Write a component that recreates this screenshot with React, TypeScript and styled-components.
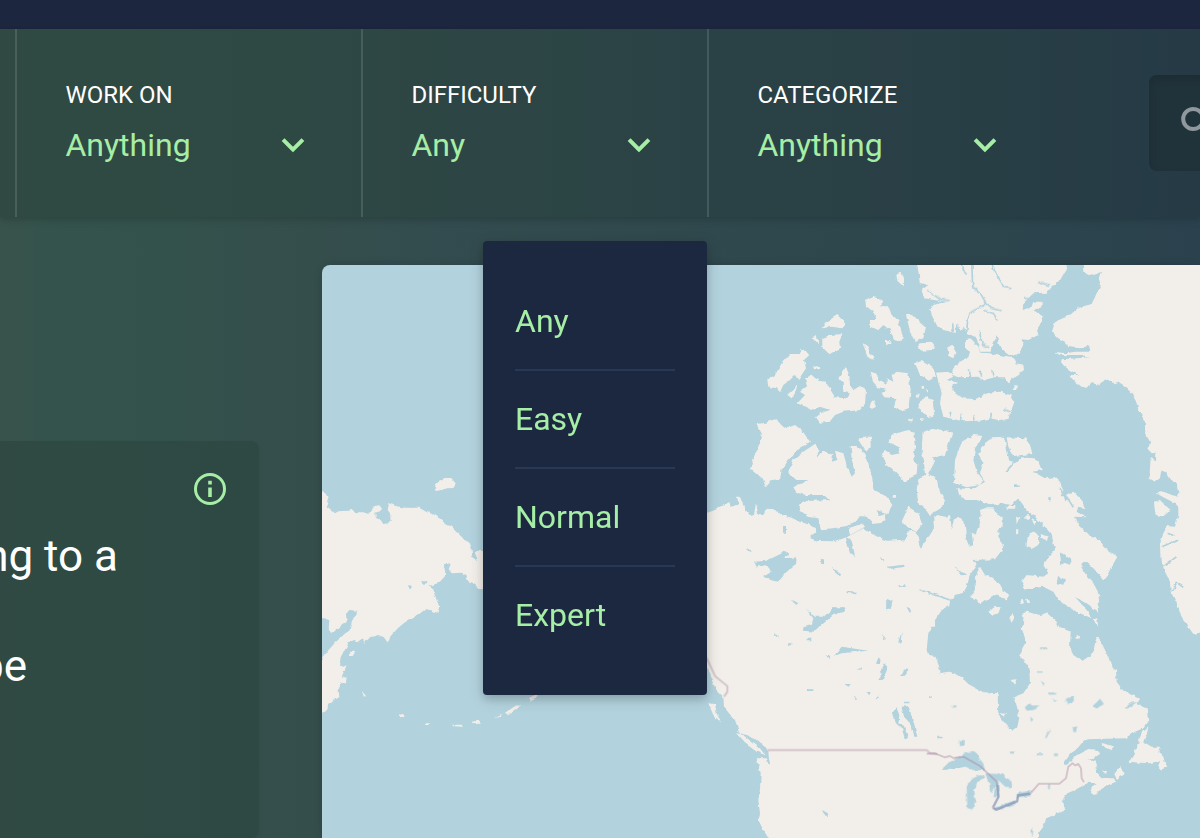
import React from 'react';
import styled, { createGlobalStyle } from 'styled-components';

const mint = '#a6eea5';
const water = '#b2d2dd';
const land = '#f2efea';

const GlobalStyle = createGlobalStyle`
  *, *::before, *::after { box-sizing: border-box; }
  body { margin: 0; overflow: hidden; background: #1c273f; }
`;

const Page = styled.div`
  position: relative;
  display: flex;
  flex-direction: column;
  width: 1200px;
  height: 838px;
  overflow: hidden;
  font-family: Roboto, 'Liberation Sans', sans-serif;
  color: #fff;
  background: linear-gradient(90deg, #39534c 0, #34534c 50px, #34524c 180px, #354f4c 270px, #334c4e 420px, #2d464d 950px, #2b424e 1200px);
`;

const TopBar = styled.header`
  flex: 0 0 29px;
  background: #1c273f;
`;

const FilterBar = styled.nav`
  display: flex;
  flex: 0 0 188px;
  background: linear-gradient(90deg, #304a43 0, #2e4844 300px, #2b4345 650px, #283e45 1000px, #253a45 1200px);
  box-shadow: 0 4px 8px rgba(0, 0, 0, 0.1), 0 2px 4px rgba(0, 0, 0, 0.06);
`;

const Lead = styled.div`
  flex: 0 0 15px;
`;

const Filter = styled.div`
  flex: 0 0 346px;
  padding: 48px 48px 48px 48.4px;
  border-left: 2px solid rgba(255, 255, 255, 0.12);
`;

const FilterLabel = styled.div`
  margin-bottom: 8px;
  font-size: 24px;
  line-height: 36px;
`;

const FilterValue = styled.div`
  display: flex;
  align-items: center;
  justify-content: space-between;
  color: ${mint};
  font-size: 32px;
  line-height: 48px;
`;

const SearchBox = styled.div`
  flex: 0 0 300px;
  height: 96px;
  margin: 46px 0 0 96px;
  padding: 28px;
  border-radius: 8px;
  background: #20323a;
  box-shadow: inset 0 4px 8px rgba(0, 0, 0, 0.12);
`;

const Content = styled.main`
  display: flex;
  flex: 1;
  align-items: flex-start;
  justify-content: space-between;
`;

const ChallengeCard = styled.section`
  width: 259px;
  height: 397px;
  margin-top: 224px;
  padding: 32px 33px 0 0;
  border-radius: 0 8px 8px 0;
  background: linear-gradient(90deg, #304a43, #2e4844);
  box-shadow: 0 2px 4px rgba(0, 0, 0, 0.07);
`;

const CardTools = styled.div`
  display: flex;
  justify-content: flex-end;
  height: 32px;
  margin-bottom: 24px;
`;

const Line = styled.div<{ $width: number }>`
  display: flex;
  justify-content: flex-end;
  width: ${(p) => p.$width}px;
  margin-bottom: 55px;
  overflow: hidden;
  font-size: 44px;
  line-height: 55px;
  white-space: nowrap;
`;

const MapPane = styled.section`
  width: 878px;
  height: 573px;
  margin-top: 48px;
  overflow: hidden;
  border-radius: 8px 0 0 0;
  background: ${water};
  box-shadow: 0 0 8px rgba(0, 0, 0, 0.14);
`;

const MapSvg = styled.svg`
  display: block;
`;

const Menu = styled.ul`
  position: absolute;
  left: 483px;
  top: 241px;
  width: 224px;
  margin: 0;
  padding: 32px;
  list-style: none;
  border-radius: 4px;
  background: #1c2840;
  box-shadow: 0 4px 8px rgba(0, 0, 0, 0.14), 0 4px 16px rgba(0, 0, 0, 0.14);
`;

const MenuItem = styled.li`
  padding: 24px 0;
  color: ${mint};
  font-size: 32px;
  line-height: 48px;
  & + & { border-top: 2px solid #293853; }
`;

const Chevron = () => (
  <svg width="40" height="40" viewBox="0 0 20 20" fill={mint}>
    <path d="M9.293 12.95l.707.707L15.657 8l-1.414-1.414L10 10.828 5.757 6.586 4.343 8z" />
  </svg>
);

const InfoIcon = () => (
  <svg width="32" height="32" viewBox="0 0 32 32" fill="none">
    <circle cx="16" cy="16" r="14.5" stroke={mint} strokeWidth="3" />
    <path d="M14.2 7.8h3.6v3.6h-3.6zM14.2 14.4h3.6V24h-3.6z" fill={mint} />
  </svg>
);

const SearchIcon = () => (
  <svg width="36" height="36" viewBox="0 0 36 36" fill="none" stroke="#8f989c" strokeWidth="4">
    <circle cx="16.2" cy="16" r="10" />
    <path d="M23 23l9 9" />
  </svg>
);

/* Each region is digitised at three units per map pixel from its own origin. */
interface Region {
  x: number;
  y: number;
  land: string[];
  lakes?: string;
  channels?: string;
  border?: string;
}

const regions: Region[] = [
  {
    x: 320, y: 460,
    land: [
      'M-20 86L14 96 22 110 26 128 20 142 30 150 44 160 56 154 84 152 94 150 104 157 130 157 145 162 152 154 164 138 178 136 186 146 180 154 166 158 168 174 182 180 190 192 204 190 212 180 210 160 203 150 207 130 225 137 255 143 298 143 318 155 345 165 365 180 372 190 390 198 412 218 435 240 453 256 455 270 457 292 464 300 472 296 465 280 475 272 520 275 520 388 478 386 462 372 445 364 436 345 425 338 395 340 386 328 392 312 380 308 370 318 376 330 374 350 355 370 335 376 325 378 340 388 345 408 352 425 358 440 352 458 335 452 318 447 300 460 285 472 255 487 235 503 212 528 202 547 192 532 175 525 150 532 132 552 130 534 112 546 104 540 86 546 80 562 62 590 60 610 70 620 80 616 72 634 66 648 80 655 78 670 62 668 56 690 58 712 45 718 24 732 22 752-20 768-20 620 6 598 24 572 45 548 76 520 88 512 95 485 112 452 88 450 78 462 80 486 60 500 34 522 26 504 28 480 6 474-20 470Z',
      'M344 90L346 76 360 60 375 54 395 55 408 72 400 84 382 85 365 89 350 93Z',
      'M84 588L96 574 106 576 98 588Z',
      'M125 692L138 708 132 710ZM238 764L250 762 254 770 242 772ZM318 790h8v5h-8ZM396 794L430 794 428 800 400 799ZM455 785L475 782 480 788 458 790ZM555 758L580 742 590 736 600 738 590 748 565 762ZM520 774L545 765 543 770ZM622 716L655 700 652 710 630 722Z',
    ],
    lakes: 'M303 364h20l-6 10h-12ZM265 376h10v7h-10Z',
  },
  {
    x: 740, y: 260,
    land: [
      'M468 40L485 35 492 55 492 78 482 72 472 62Z',
      'M375 120L400 108 425 120 425 140 445 138 455 165 475 180 488 230 480 245 462 240 450 210 430 195 415 210 390 200 390 180 410 180 400 155 378 138Z',
      'M245 205L260 185 292 165 313 185 308 205 275 200Z',
      'M215 232L225 228 238 242 232 252Z',
      'M247 235L270 225 307 222 298 245 300 265 268 283 247 262Z',
      'M368 250L380 255 402 300 382 290ZM430 240L450 240 455 250 440 256ZM220 320L240 318 240 328 222 328Z',
      'M82 360L105 345 125 310 150 282 180 282 185 265 208 285 192 300 198 325 175 360 165 345 150 360 130 375 120 397 110 385 85 380Z',
      'M142 405L172 375 165 400 155 415Z',
      'M172 430L195 405 180 395 200 380 195 355 215 345 235 362 255 365 275 395 285 412 318 415 330 400 310 395 308 365 295 355 318 320 328 345 330 375 340 390 360 378 378 390 375 430 360 450 340 452 310 455 285 465 270 485 240 488 228 472 245 458 270 450 240 440 215 450 195 440Z',
      'M392 335L405 340 420 360 440 372 440 355 460 365 455 345 470 335 505 340 512 390 505 445 485 452 462 440 470 415 430 412 425 395 440 390 415 385 400 370Z',
      'M390 430L400 420 408 440 395 448Z',
      'M545 378h8v8h-8ZM558 386l8 4-4 8ZM530 405l10-3-6 14ZM510 475h8v8h-8ZM543 475h8v6h-8Z',
    ],
  },
  {
    x: 900, y: 260,
    land: [
      'M50 0L505 0 495 35 480 60 455 82 440 98 400 100 370 130 368 150 395 140 400 125 425 125 425 142 400 150 430 170 425 190 410 205 415 225 385 240 365 238 370 255 355 282 330 288 300 265 290 225 285 240 270 275 240 275 230 235 205 220 190 200 185 215 165 200 165 218 130 210 110 195 90 150 100 135 140 125 100 120 75 115 65 90 85 75 60 70Z',
      'M195 240L215 238 235 260 240 278 270 280 300 288 345 295 350 310 370 315 372 330 345 350 325 370 315 352 280 352 250 362 235 350 175 352 155 345 160 325 180 305 205 292 210 275 195 265Z',
      'M108 338L145 335 160 350 140 360 175 368 155 378 165 400 190 415 225 418 265 398 300 395 330 405 342 430 330 460 325 478 295 480 270 475 240 482 190 484 150 475 130 470 120 430 125 400Z',
      'M18 162L35 162 60 185 78 200 70 235 45 245 30 215Z',
      'M55 250L105 248 103 270 60 272ZM142 262L158 258 167 275 160 292 145 285Z',
      'M45 310L65 303 100 325 108 350 90 362 60 345ZM50 440L75 408 98 420 103 470 85 473Z',
      'M338 390l8-14 8 0-6 14Z',
      'M548 0L550 35 570 48 590 42 603 35 596 55 603 75 590 100 575 132 535 143 510 165 465 185 456 215 475 235 500 248 505 262 540 265 568 257 570 275 525 275 500 280 460 276 480 285 540 285 570 292 530 295 485 298 483 310 505 328 535 345 508 345 525 365 545 380 562 384 575 370 600 375 618 355 640 370 655 365 680 382 700 402 710 430 715 450 735 470 735 510 748 530 755 550 742 565 755 580 770 578 768 610 940 610 940 0Z',
    ],
    channels: 'M215 0L218 80 240 98 256 125 250 138 215 155 203 180 200 218M256 130L275 145 302 152M250 150L280 160 292 180M268 0L300 60 312 82 335 86M186 0L190 30 200 40M82 90L120 118 150 122M238 215L248 255 268 262M415 66L448 76M372 112L400 122M212 348L208 330M245 350L240 332M280 350L276 332M160 215L158 190M175 212L172 192M150 470L152 452M182 480L184 462M225 480L222 466M272 475L274 458M330 455L312 448',
  },
  {
    x: 700, y: 400,
    land: [
      'M0 345L40 332 62 316 88 310 92 320 110 316 118 306 108 290 118 290 130 305 136 330 152 348 162 345 168 308 175 345 190 345 200 326 225 328 245 345 275 353 300 366 325 372 345 385 350 396 332 405 332 415 350 423 400 424 440 412 462 400 490 385 510 398 535 412 560 422 600 420 618 422 620 395 640 392 655 408 664 446 670 430 690 405 702 385 700 355 712 345 735 350 750 345 755 385 762 400 762 360 775 352 790 360 790 575 762 578 762 595 750 600 748 615 725 630 705 660 705 680 0 680Z',
      'M168 72L195 68 225 58 260 85 285 75 305 90 330 125 285 155 262 185 245 210 240 238 215 240 198 262 188 235 150 208 165 165 185 115 185 100Z',
      'M345 132L355 145 352 175 370 152 400 165 395 185 412 180 405 152 430 160 440 195 455 230 465 220 455 180 452 138 470 138 490 155 505 190 517 235 520 268 560 290 577 315 560 345 545 368 520 372 500 350 480 348 470 362 440 378 400 385 362 388 355 355 330 352 305 335 295 315 320 303 390 300 375 285 320 285 290 278 280 262 325 240 285 240 265 215 280 180 310 155Z',
      'M475 120L490 110 512 110 515 125 500 158 488 140Z',
      'M445 385L490 370 495 380 450 405Z',
      'M545 160L555 150 575 165 600 160 595 140 565 125 575 105 630 88 640 100 645 140 640 180 652 195 650 225 628 235 615 250 600 230 575 205 560 195Z',
      'M668 95L705 85 757 98 735 165 700 172 702 190 685 222 710 235 715 265 735 302 722 325 690 345 680 330 655 310 650 270 655 235 675 225 672 180 665 160Z',
      'M605 365L625 320 655 340 665 370 650 395 620 380Z',
      'M578 285h10v8h-10ZM628 56h8v8h-8Z',
    ],
    lakes: 'M162 485L200 482 255 455 265 465 250 475 290 472 288 495 260 515 235 545 210 540 190 530 215 515 200 495 170 500ZM362 478l10 0 0 14-8 0ZM396 500L425 525 418 528 404 516ZM272 600L298 610 290 616ZM140 430L152 460 144 456ZM560 500L612 494 614 500 575 506ZM655 570L680 572 678 578ZM560 605L578 600 572 625 558 628ZM595 556h22v5h-22ZM440 574h26v6h-26ZM620 620L634 628 630 638ZM252 378h6v20h-6ZM540 470l10 10-6 0ZM437 412L455 420 465 470 450 460ZM670 345l28 5-12 22ZM530 330l30 12-22 6Z',
    channels: 'M680 575L720 590 750 600',
  },
  {
    x: 930, y: 400,
    land: [
      'M60 400L72 360 85 350 105 375 108 415 118 440 130 435 125 400 138 400 145 380 152 345 150 330 165 325 190 325 205 345 218 355 218 380 205 392 205 410 222 435 212 455 195 478 125 480 140 492 120 525 110 560 100 578 60 590Z',
      'M72 248L75 180 95 125 130 105 160 108 135 145 130 180 140 215 160 240 150 255 110 262Z',
      'M82 265L130 268 165 245 150 220 160 190 145 165 155 140 190 112 222 110 230 145 238 185 255 190 275 172 310 175 325 185 335 210 310 215 345 235 375 232 390 245 400 270 395 290 430 275 455 300 465 325 445 320 440 335 468 352 435 350 445 375 475 405 510 420 520 440 562 470 545 500 535 520 522 540 490 505 465 482 450 495 465 520 490 550 512 590 500 610 505 635 470 610 435 590 470 630 485 655 440 635 405 615 385 600 370 575 340 560 285 568 275 545 290 525 340 530 355 520 338 492 360 465 375 450 365 405 345 380 315 350 290 330 265 295 245 315 215 310 190 315 140 300 110 300 88 285Z',
      'M230 112L285 115 300 135 308 162 275 165 250 168 235 140Z',
      'M290 430L295 405 315 396 328 410 325 435 305 447 290 440Z',
      'M150 500L165 525 190 535 212 555 215 572 238 585 230 598 195 585 170 600 150 612 140 598 120 592 138 570 135 530Z',
      'M175 635L195 620 212 622 205 640 185 648ZM238 655L248 640 255 650 245 668ZM270 600l8-4 4 14-8 2ZM288 596l10 2 2 8-8 0ZM492 658l10-4 2 24-8-6ZM286 346h14v10h-14ZM304 358l16 6-6 12ZM332 402l22 8-4 10-16-4ZM258 350l10 4-8 18ZM255 388h10v12h-10ZM230 318h26v8h-26Z',
      'M610-10L635 30 640 60 650 70 645 100 660 125 655 150 680 158 678 180 662 175 660 205 658 235 675 245 690 235 695 210 710 220 715 235 740 250 745 280 740 290 700 275 680 280 700 292 735 310 745 320 745 345 735 380 712 378 700 400 690 435 692 480 705 515 720 545 722 575 740 610 755 650 775 680 790 702 850 690 850-10Z',
      'M672 305L690 300 705 315 722 330 705 345 685 350 675 335Z',
    ],
    lakes: 'M390 455L425 480 420 494 402 488 394 500ZM384 528L405 542 400 554 380 550ZM74 500L108 524 96 526ZM150 480h16l18 30-8-2ZM352 296l14-4-6 10ZM252 256h14v5h-14Z',
    channels: 'M695 440L745 420M700 500L740 470M725 575L740 548 760 562M712 400L735 408M695 255L728 265M390 262L410 300M410 290L430 322M228 215L250 190M715 232L700 262',
  },
  {
    x: 700, y: 600,
    land: [
      'M0-10L750-10 748 12 725 30 700 65 685 100 680 150 685 165 705 168 715 190 722 220 745 215 790 232 790 730 210 730 205 714 190 690 175 660 180 640 175 600 180 570 182 520 170 475 200 475 208 490 205 455 190 440 160 415 115 395 110 370 95 350 72 320 70 290 40 260 30 220 10 180 0 180Z',
      'M108 400L125 402 155 425 180 445 195 465 170 455 135 430Z',
      'M25 310L45 312 50 340 63 368 40 345Z',
    ],
    lakes: 'M318 28L345 50 375 50 400 22 438 22 430 35 400 45 365 75 345 95 308 92 310 82 335 75 340 55ZM402 168L425 140 455 145 505 152 455 157 425 160ZM605 320L625 318 640 365 652 410 643 410 635 375 612 350ZM575 340L590 325 598 345 595 370 612 378 625 415 615 418 605 385 588 370ZM540 215L555 190 565 200 548 240 535 240 545 225ZM528 190l8-18 6 8-6 16ZM600 225L622 203 620 218 606 232ZM378 165h10l0 14ZM222 104h10v6h-10ZM264 130h10v6h-10ZM320 116h14v5h-14ZM470 210l14-8 0 6ZM432 252h20l-6 8ZM318 268h22v5h-22ZM500 276h12l-4 10ZM462 288l8 4-4 5ZM528 290h8v5h-8ZM684 294l12-6-2 6ZM612 305h16v5h-16ZM366 630L384 640 384 650 376 650ZM275 0L295 8 290 14ZM558 0L575 5 572 28 560 22ZM620 22L636 30 630 38ZM595 125L605 95 602 130ZM548 102L558 118 552 120ZM725 510L750 485 780 475 795 480 795 500 760 508ZM712 410h16v5h-16Z',
    channels: 'M60 298L75 350M30 235L55 290M170 420L200 450M205 480L208 495',
    border: 'M202 450L680 450 690 460 712 462M10 160L24 182 45 228 82 258 82 275 72 290',
  },
  {
    x: 930, y: 600,
    land: [
      'M-10 225L32 220 60 215 95 232 115 252 160 277 203 280 205 345 225 370 245 392 262 380 268 355 258 310 250 292 280 280 300 250 298 205 280 180 267 165 285 130 285 115 275 85 283 60 275 42 290 35 330 45 350 38 380 65 388 82 422 95 420 140 430 165 455 182 475 172 490 155 497 120 504 108 515 130 535 170 545 200 558 212 560 245 580 272 605 285 630 298 618 308 650 325 655 365 640 385 615 395 585 415 470 418 455 430 445 442 425 455 405 485 402 500 418 488 440 465 475 447 505 450 510 462 490 475 475 480 498 485 502 500 500 520 515 535 550 535 562 545 540 552 515 565 495 585 480 578 485 560 500 550 470 548 462 555 435 570 412 580 400 595 402 620 412 630 380 640 350 655 340 680 325 700 322 730-10 730Z',
      'M655 382L650 405 640 425 665 440 690 440 685 455 700 470 708 500 695 510 685 500 690 482 660 490 597 486 610 465 620 440 635 400Z',
      'M510 428L530 432 552 442 545 450 525 442ZM570 500L584 520 560 538 553 522ZM512 510l20 6-4 6ZM440 106l10-2-2 12-8 0ZM242 240l18-2-8 16ZM208 338l20 4-6 8Z',
    ],
    lakes: 'M38 505L60 485 90 470 110 455 140 458 148 475 160 490 165 512 130 510 95 495 75 508ZM110 560L125 535 150 525 165 530 145 545 132 570 137 600 128 628 112 625ZM165 520L215 522 240 540 245 562 225 560 205 540 208 570 205 595 190 590 195 560 180 580 178 550ZM188 625L255 600 255 612 200 632ZM255 590L265 578 305 572 300 588 265 592ZM284 322L300 308 306 320 334 318 310 330 290 332ZM408 295L430 290 432 302 420 314 408 306ZM488 318L510 296 522 312 500 325ZM580 325L605 308 620 306 595 326ZM332 242L346 252 338 254ZM355 278h20v6h-20ZM368 300l14-2-6 8ZM345 410L362 388 358 400 348 412ZM88 420h16v18h-14ZM66 316h10v7h-10ZM322 214h16v4h-16ZM330 142h22v5h-22ZM240 455h14v6h-14ZM322 460h14v5h-14ZM372 460h12v5h-12ZM300 350l10 8-6 8ZM428 380l14 0-4 16-8 0ZM354 553h6v14h-6ZM300 690l10-8-2 30Z',
    channels: 'M498 500L512 528M405 600L400 604',
    border: 'M-10 461L15 460 45 472 60 468 70 474 100 470 150 498 200 545 205 590 188 622 200 630 262 603 265 585 300 582 327 551 388 551 408 535 415 500 428 490 435 496 445 492 453 505 455 535 462 547',
  },
];

const WorldMap = () => (
  <MapSvg width="878" height="573" viewBox="322 265 878 573">
    <defs>
      <filter id="coast" filterUnits="userSpaceOnUse" x="300" y="240" width="920" height="620" colorInterpolationFilters="sRGB">
        <feTurbulence type="fractalNoise" baseFrequency="0.22" numOctaves="1" seed="4" result="noise" />
        <feDisplacementMap in="SourceGraphic" in2="noise" scale="4" xChannelSelector="R" yChannelSelector="G" />
        <feGaussianBlur stdDeviation="0.7" />
      </filter>
    </defs>
    <g filter="url(#coast)">
      {regions.map((r) => (
        <g key={`${r.x}-${r.y}`} transform={`translate(${r.x} ${r.y}) scale(0.33333)`}>
          <path d={r.land.join('')} fill={land} />
        </g>
      ))}
      {regions.map((r) => (
        <g key={`${r.x}-${r.y}`} transform={`translate(${r.x} ${r.y}) scale(0.33333)`}>
          {r.lakes && <path d={r.lakes} fill={water} />}
          {r.channels && <path d={r.channels} fill="none" stroke={water} strokeWidth="5" />}
        </g>
      ))}
    </g>
    {regions.map((r) => r.border && (
      <path
        key={`${r.x}-${r.y}`}
        transform={`translate(${r.x} ${r.y}) scale(0.33333)`}
        d={r.border}
        fill="none"
        stroke="#a27b98"
        strokeOpacity="0.36"
        strokeWidth="6"
        strokeLinejoin="round"
      />
    ))}
    <path d="M993 808l3 1.500 21-8 1-6 12-2M998 785l0.500 12-5 10" fill="none" stroke="#7d9bbd" strokeOpacity="0.5" strokeWidth="2.500" />
  </MapSvg>
);

const filters = [
  { label: 'WORK ON', value: 'Anything' },
  { label: 'DIFFICULTY', value: 'Any' },
  { label: 'CATEGORIZE', value: 'Anything' },
];

const levels = ['Any', 'Easy', 'Normal', 'Expert'];

export default function App() {
  return (
    <>
      <GlobalStyle />
      <Page>
        <TopBar />
        <FilterBar>
          <Lead />
          {filters.map((f) => (
            <Filter key={f.label}>
              <FilterLabel>{f.label}</FilterLabel>
              <FilterValue>
                {f.value}
                <Chevron />
              </FilterValue>
            </Filter>
          ))}
          <SearchBox>
            <SearchIcon />
          </SearchBox>
        </FilterBar>
        <Content>
          <ChallengeCard>
            <CardTools>
              <InfoIcon />
            </CardTools>
            <Line $width={118}>ng to a</Line>
            <Line $width={27}>be</Line>
          </ChallengeCard>
          <MapPane>
            <WorldMap />
          </MapPane>
        </Content>
        <Menu>
          {levels.map((level) => (
            <MenuItem key={level}>{level}</MenuItem>
          ))}
        </Menu>
      </Page>
    </>
  );
}
